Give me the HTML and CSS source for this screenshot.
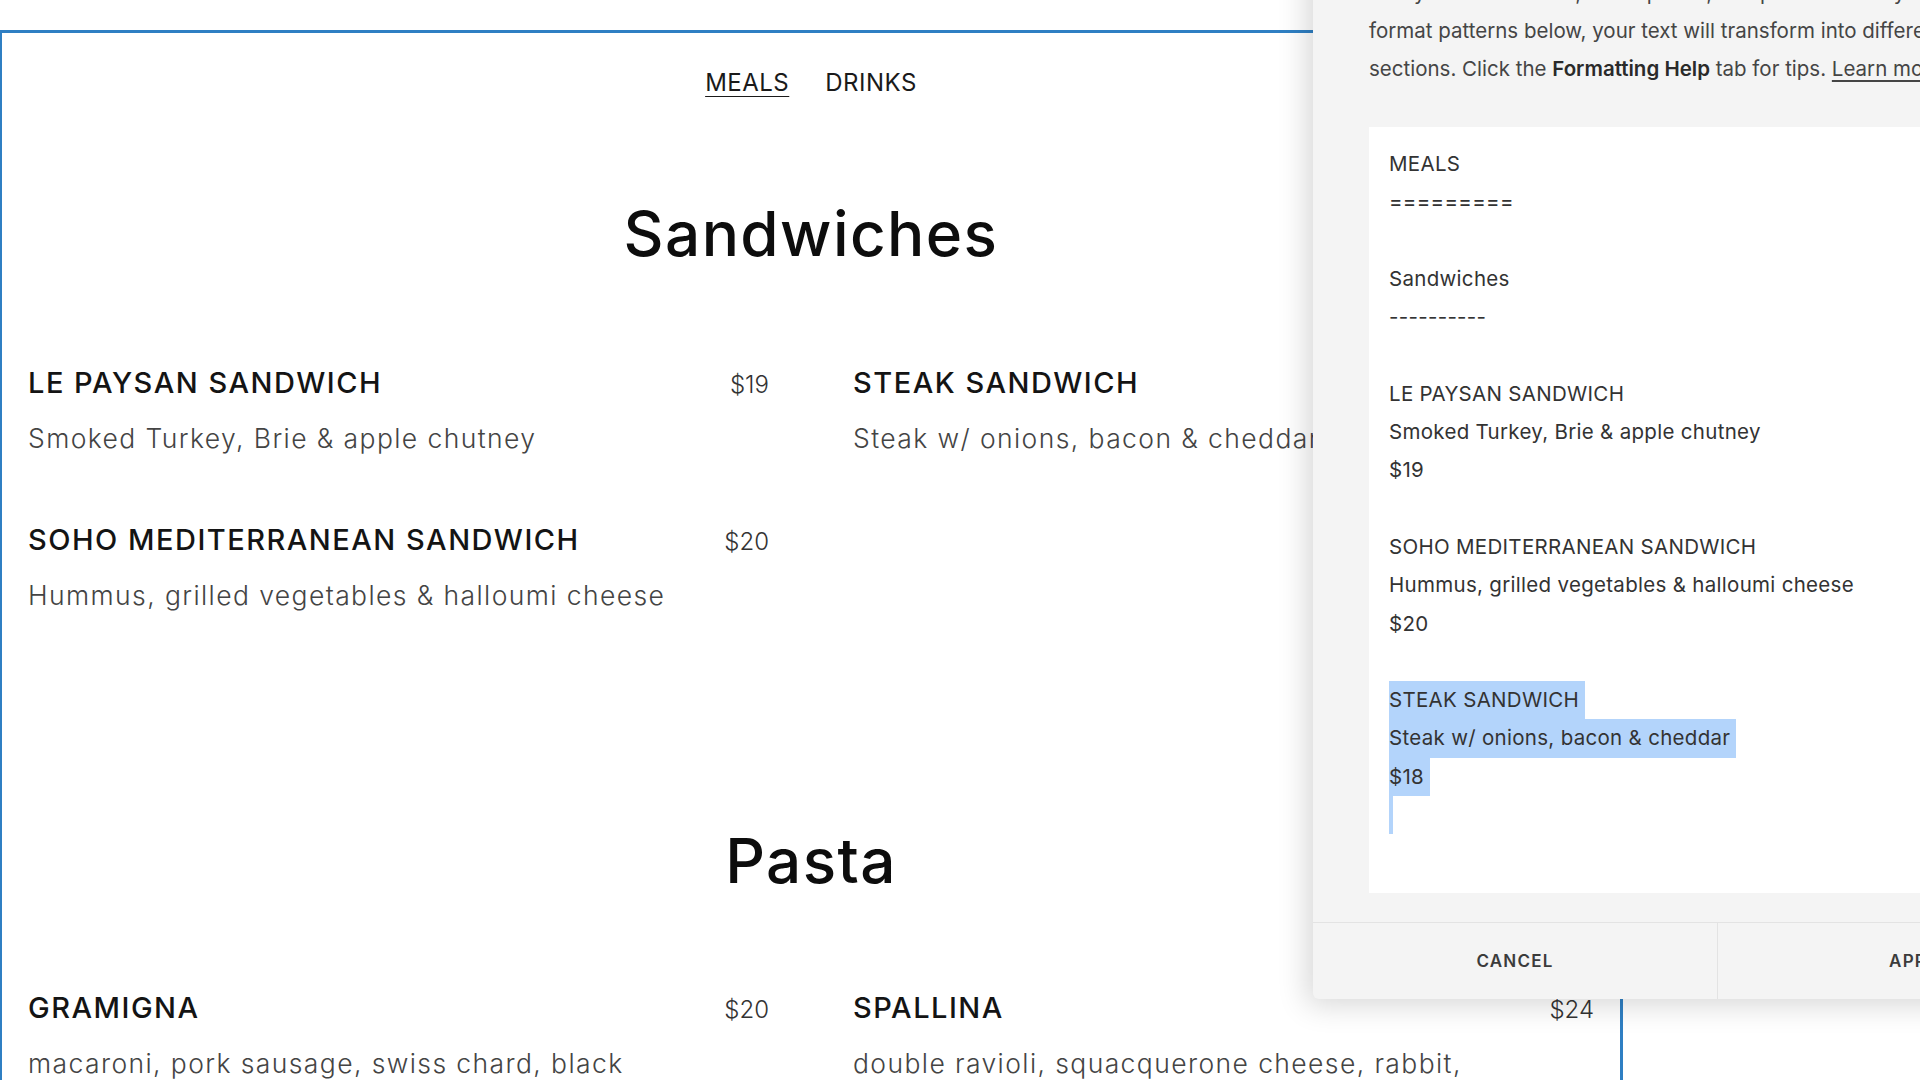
FILE: index.html
```html
<!DOCTYPE html>
<html lang="en">
<head>
<meta charset="utf-8">
<title>Menu editor</title>
<link rel="stylesheet" href="styles.css">
</head>
<body>
<div class="page">
  <div class="frame">
    <nav class="menu-nav">
      <a class="nav-link active">MEALS</a>
      <a class="nav-link">DRINKS</a>
    </nav>

    <section class="menu-section">
      <h2 class="section-title">Sandwiches</h2>
      <div class="items">
        <div class="col">
          <div class="item">
            <div class="item-head"><span class="item-name">LE PAYSAN SANDWICH</span><span class="item-price">$19</span></div>
            <div class="item-desc">Smoked Turkey, Brie &amp; apple chutney</div>
          </div>
          <div class="item">
            <div class="item-head"><span class="item-name">SOHO MEDITERRANEAN SANDWICH</span><span class="item-price">$20</span></div>
            <div class="item-desc">Hummus, grilled vegetables &amp; halloumi cheese</div>
          </div>
        </div>
        <div class="col">
          <div class="item">
            <div class="item-head"><span class="item-name">STEAK SANDWICH</span><span class="item-price">$18</span></div>
            <div class="item-desc">Steak w/ onions, bacon &amp; cheddar</div>
          </div>
        </div>
      </div>
    </section>

    <section class="menu-section pasta">
      <h2 class="section-title">Pasta</h2>
      <div class="items">
        <div class="col">
          <div class="item">
            <div class="item-head"><span class="item-name">GRAMIGNA</span><span class="item-price">$20</span></div>
            <div class="item-desc">macaroni, pork sausage, swiss chard, black<br>pepper</div>
          </div>
        </div>
        <div class="col">
          <div class="item">
            <div class="item-head"><span class="item-name">SPALLINA</span><span class="item-price">$24</span></div>
            <div class="item-desc">double ravioli, squacquerone cheese, rabbit,<br>sage butter</div>
          </div>
        </div>
      </div>
    </section>
  </div>
</div>

<aside class="panel">
  <p class="intro">Add your menu items, descriptions, and prices. When you use the<br>format patterns below, your text will transform into different menu<br>sections. Click the <b>Formatting Help</b> tab for tips. <u>Learn more</u></p>
  <div class="editor">
    <div class="ln">MEALS</div>
    <div class="ln">=========</div>
    <div class="ln"></div>
    <div class="ln">Sandwiches</div>
    <div class="ln">----------</div>
    <div class="ln"></div>
    <div class="ln">LE PAYSAN SANDWICH</div>
    <div class="ln">Smoked Turkey, Brie &amp; apple chutney</div>
    <div class="ln">$19</div>
    <div class="ln"></div>
    <div class="ln">SOHO MEDITERRANEAN SANDWICH</div>
    <div class="ln">Hummus, grilled vegetables &amp; halloumi cheese</div>
    <div class="ln">$20</div>
    <div class="ln"></div>
    <div class="ln"><span class="sel">STEAK SANDWICH</span></div>
    <div class="ln"><span class="sel">Steak w/ onions, bacon &amp; cheddar</span></div>
    <div class="ln"><span class="sel">$18</span></div>
    <div class="ln"><span class="sel caret"></span></div>
  </div>
  <div class="panel-footer">
    <button class="btn">CANCEL</button>
    <button class="btn">APPLY</button>
  </div>
</aside>
</body>
</html>
```

FILE: styles.css
```css
html, body {
  margin: 0;
  padding: 0;
}
body {
  width: 1920px;
  height: 1080px;
  overflow: hidden;
  position: relative;
  background: #ffffff;
  font-family: Inter, "Noto Sans", sans-serif;
  color: #111;
}

.page {
  padding-top: 30px;
}

.frame {
  width: 1623px;
  height: 1060px;
  border-top: 3px solid #2f7fc3;
  border-left: 2px solid #2f7fc3;
  border-right: 3px solid #2f7fc3;
  box-sizing: border-box;
}

.menu-nav {
  display: flex;
  justify-content: center;
  gap: 36px;
  padding-top: 34px;
  line-height: 32px;
  font-size: 24px;
  font-weight: 400;
  letter-spacing: 0.5px;
}
.nav-link {
  color: #1a1a1a;
}
.nav-link.active {
  text-decoration: underline;
  text-underline-offset: 5px;
  text-decoration-thickness: 1px;
}

.section-title {
  margin: 99px 0 0;
  text-align: center;
  font-size: 62px;
  line-height: 72px;
  font-weight: 500;
  letter-spacing: 1.4px;
  color: #0d0d0d;
}

.items {
  display: grid;
  grid-template-columns: 741px 741px;
  column-gap: 84px;
  padding-left: 26px;
  margin-top: 95px;
}
.pasta .section-title {
  margin-top: 212px;
}
.pasta .items {
  margin-top: 93px;
}

.col {
  display: flex;
  flex-direction: column;
  gap: 66px;
}

.item-head {
  display: flex;
  justify-content: space-between;
  align-items: baseline;
  line-height: 36px;
}
.item-name {
  font-size: 29px;
  font-weight: 500;
  letter-spacing: 1.5px;
  color: #141414;
}
.item-price {
  font-size: 24px;
  font-weight: 300;
  color: #333;
}
.item-desc {
  margin-top: 17px;
  font-size: 26.5px;
  line-height: 36px;
  font-weight: 300;
  letter-spacing: 1.4px;
  color: #444;
  white-space: nowrap;
}

/* Overlay editor panel */
.panel {
  position: absolute;
  left: 1313px;
  top: -40px;
  width: 808px;
  height: 1039px;
  box-sizing: border-box;
  padding-top: 14px;
  background: #f4f4f4;
  border-bottom-left-radius: 6px;
  box-shadow: -6px 6px 30px rgba(0, 0, 0, 0.16);
  font-family: Inter, "Liberation Sans", Arial, sans-serif;
  display: flex;
  flex-direction: column;
}

.intro {
  margin: 0;
  padding: 0 56px;
  font-size: 20.5px;
  line-height: 38px;
  color: #454545;
  white-space: nowrap;
}
.intro b {
  font-weight: 600;
  color: #2a2a2a;
}
.intro u {
  text-underline-offset: 4px;
}

.editor {
  margin: 39px 56px 0;
  height: 766px;
  box-sizing: border-box;
  padding: 18px 20px;
  background: #ffffff;
  font-size: 20.5px;
  letter-spacing: 0.3px;
  line-height: 38.3px;
  color: #333;
}
.ln {
  height: 38.3px;
  white-space: pre;
}
.sel {
  display: inline-block;
  height: 38.3px;
  padding-right: 6px;
  background: #b3d4fb;
}
.sel.caret {
  width: 0;
  padding-right: 4px;
  vertical-align: top;
}

.panel-footer {
  margin-top: 29px;
  flex: 1;
  display: flex;
  border-top: 1px solid #e3e3e3;
}
.btn {
  width: 404px;
  flex: none;
  border: 0;
  background: transparent;
  font-family: Inter, "Liberation Sans", Arial, sans-serif;
  font-size: 17px;
  font-weight: 600;
  letter-spacing: 1.2px;
  color: #3b3b3b;
  padding: 0;
}
.btn + .btn {
  border-left: 1px solid #e3e3e3;
}
```
